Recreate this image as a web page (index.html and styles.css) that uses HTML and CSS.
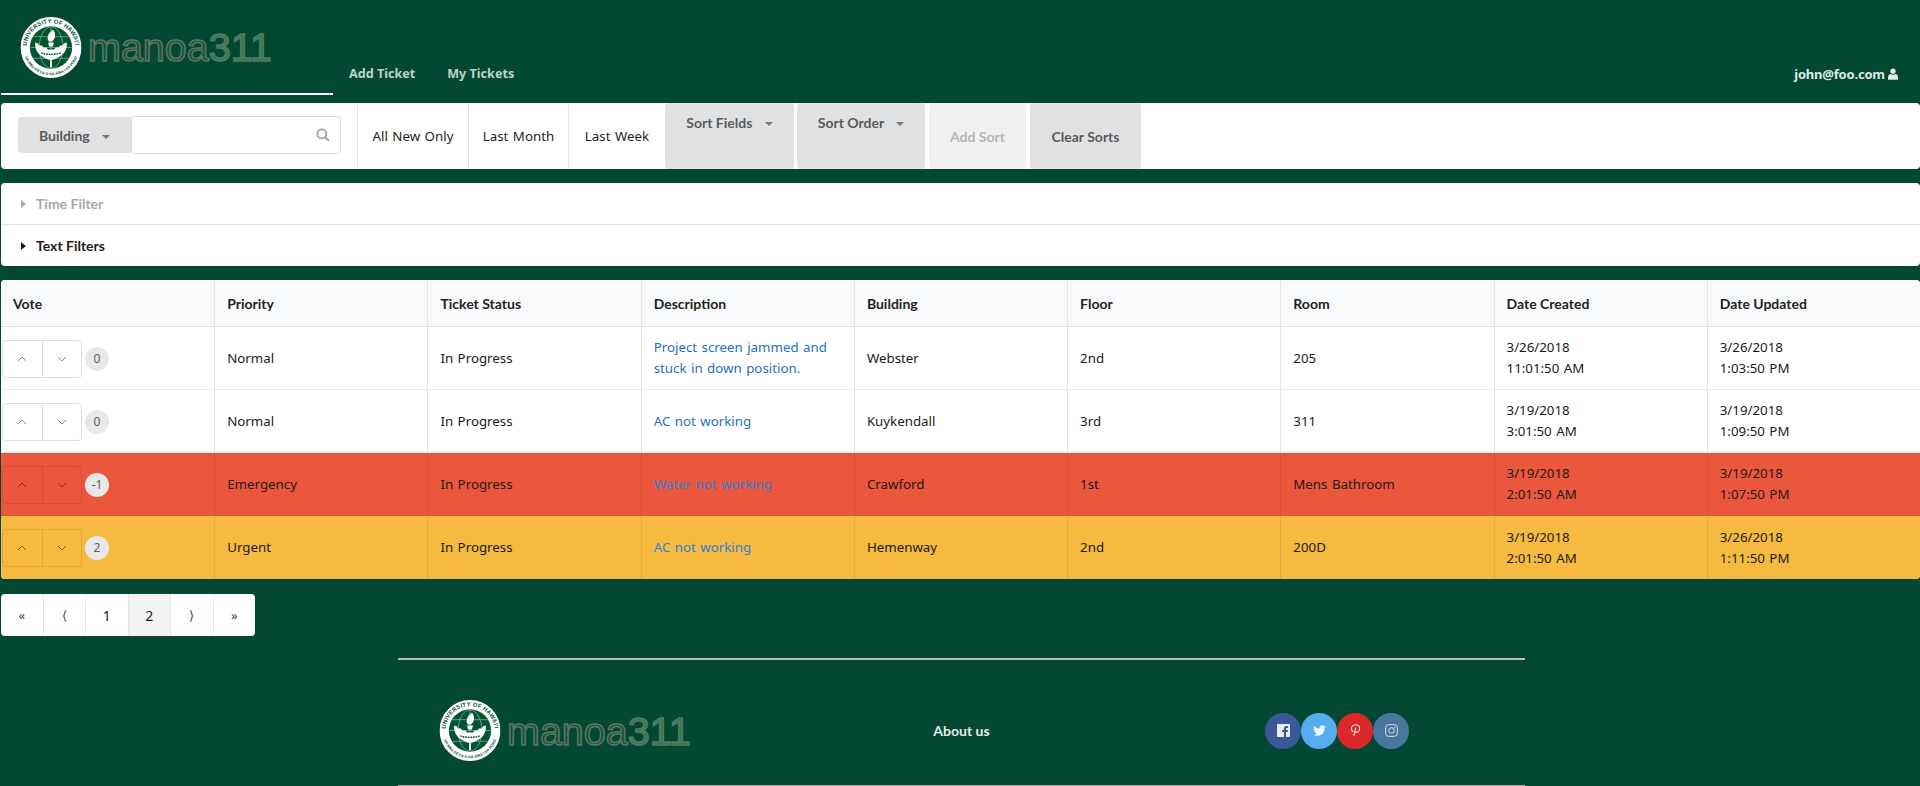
FILE: index.html
```html
<!DOCTYPE html>
<html lang="en">
<head>
    <meta charset="UTF-8">
    <meta name="viewport" content="width=device-width, initial-scale=1.0">
    <title>manoa311</title>
    <link rel="stylesheet" href="styles.css">
</head>
<body>
    <!-- Shared seal artwork + chevrons -->
    <svg class="defs" width="0" height="0">
        <defs>
            <path id="arcTop" d="M7.500 39.400A24.900 24.900 0 1 1 54.500 39.400"/>
            <path id="arcBottom" d="M2.800 31a28.200 28.200 0 0 0 56.400 0"/>
        </defs>
        <symbol id="seal" viewBox="0 0 62 62">
            <circle cx="31" cy="31" r="31" fill="#fff"/>
            <circle cx="31" cy="31" r="21.500" fill="#03552f"/>
            <g fill="none" stroke="#8fb89f" stroke-width=".7">
                <ellipse cx="31" cy="31" rx="12" ry="21"/>
                <path d="M31 10v42M10 31h42M13 20h36M13 42h36"/>
            </g>
            <path d="M33 13c3 3 3 9-1 12h-3c-3-3-1-9 4-12z" fill="#fff"/>
            <path d="M28 26h6l-1 4h-4z" fill="#fff"/>
            <path d="M15 26l3 1 1 2 3 0 1 2 3 0 2 2h6l2-2 3 0 1-2 3 0 1-2 3-1c1 8-4 15-16 18c-12-3-17-10-16-18z" fill="#fff"/>
            <path d="M21 36.500c6 2 14 2 20 0" fill="none" stroke="#03552f" stroke-width="1.500" stroke-dasharray="1.800 .8"/>
            <path d="M31 44v7" stroke="#fff" stroke-width="1.800"/>
        </symbol>
        <symbol id="chev-up" viewBox="0 0 10 6"><path d="M1 5l4-4 4 4" fill="none" stroke="currentColor" stroke-width="1"/></symbol>
        <symbol id="chev-down" viewBox="0 0 10 6"><path d="M1 1l4 4 4-4" fill="none" stroke="currentColor" stroke-width="1"/></symbol>
    </svg>

    <!-- Top nav -->
    <header class="topbar">
        <a class="brand" href="#">
            <svg class="seal" viewBox="0 0 62 62">
                <use href="#seal"/>
                <text class="seal-top"><textPath href="#arcTop" startOffset="50%" text-anchor="middle">UNIVERSITY OF HAWAI'I</textPath></text>
                <text class="seal-bottom"><textPath href="#arcBottom" startOffset="50%" text-anchor="middle">UA MAU KE EA O KA ĀINA I KA PONO</textPath></text>
            </svg>
            <span class="wordmark">manoa<b>311</b></span>
        </a>
        <nav class="nav-links">
            <a href="#">Add Ticket</a>
            <a href="#">My Tickets</a>
        </nav>
        <a class="user" href="#">john@foo.com
            <svg class="user-icon" viewBox="0 0 12 14"><circle cx="6" cy="3.600" r="3.200"/><path d="M0 14v-3.200C0 8.600 1.400 7 3 7c.8.600 1.800 1 3 1s2.200-.4 3-1c1.600 0 3 1.600 3 3.800V14z"/></svg>
        </a>
    </header>

    <!-- Toolbar -->
    <div class="toolbar">
        <div class="search-item">
            <button class="btn building">Building <i class="caret"></i></button>
            <div class="search-box">
                <svg class="search-icon" viewBox="0 0 14 14"><circle cx="5.800" cy="5.800" r="4.500" fill="none" stroke="currentColor" stroke-width="1.800"/><path d="M9 9l4 4" stroke="currentColor" stroke-width="2"/></svg>
            </div>
        </div>
        <a class="tool-link" href="#">All New Only</a>
        <a class="tool-link" href="#">Last Month</a>
        <a class="tool-link no-border" href="#">Last Week</a>
        <button class="btn sort sort-fields">Sort Fields <i class="caret"></i></button>
        <button class="btn sort sort-order">Sort Order <i class="caret"></i></button>
        <button class="btn action add-sort">Add Sort</button>
        <button class="btn action clear-sorts">Clear Sorts</button>
    </div>

    <!-- Filters -->
    <div class="filters">
        <div class="filter-row muted"><i class="arrow"></i>Time Filter</div>
        <div class="filter-row"><i class="arrow"></i>Text Filters</div>
    </div>

    <!-- Tickets -->
    <table class="tickets">
        <thead>
            <tr>
                <th>Vote</th>
                <th>Priority</th>
                <th>Ticket Status</th>
                <th>Description</th>
                <th>Building</th>
                <th>Floor</th>
                <th>Room</th>
                <th>Date Created</th>
                <th>Date Updated</th>
            </tr>
        </thead>
        <tbody>
            <tr>
                <td class="vote"><div class="vote-wrap"><div class="vote-btns"><button><svg><use href="#chev-up"/></svg></button><button><svg><use href="#chev-down"/></svg></button></div><span class="count plain">0</span></div></td>
                <td>Normal</td>
                <td>In Progress</td>
                <td><a href="#">Project screen jammed and stuck in down position.</a></td>
                <td>Webster</td>
                <td>2nd</td>
                <td>205</td>
                <td>3/26/2018<br>11:01:50 AM</td>
                <td>3/26/2018<br>1:03:50 PM</td>
            </tr>
            <tr>
                <td class="vote"><div class="vote-wrap"><div class="vote-btns"><button><svg><use href="#chev-up"/></svg></button><button><svg><use href="#chev-down"/></svg></button></div><span class="count plain">0</span></div></td>
                <td>Normal</td>
                <td>In Progress</td>
                <td><a href="#">AC not working</a></td>
                <td>Kuykendall</td>
                <td>3rd</td>
                <td>311</td>
                <td>3/19/2018<br>3:01:50 AM</td>
                <td>3/19/2018<br>1:09:50 PM</td>
            </tr>
            <tr class="emergency">
                <td class="vote"><div class="vote-wrap"><div class="vote-btns"><button><svg><use href="#chev-up"/></svg></button><button><svg><use href="#chev-down"/></svg></button></div><span class="count">-1</span></div></td>
                <td>Emergency</td>
                <td>In Progress</td>
                <td><a href="#">Water not working</a></td>
                <td>Crawford</td>
                <td>1st</td>
                <td>Mens Bathroom</td>
                <td>3/19/2018<br>2:01:50 AM</td>
                <td>3/19/2018<br>1:07:50 PM</td>
            </tr>
            <tr class="urgent">
                <td class="vote"><div class="vote-wrap"><div class="vote-btns"><button><svg><use href="#chev-up"/></svg></button><button><svg><use href="#chev-down"/></svg></button></div><span class="count">2</span></div></td>
                <td>Urgent</td>
                <td>In Progress</td>
                <td><a href="#">AC not working</a></td>
                <td>Hemenway</td>
                <td>2nd</td>
                <td>200D</td>
                <td>3/19/2018<br>2:01:50 AM</td>
                <td>3/26/2018<br>1:11:50 PM</td>
            </tr>
        </tbody>
    </table>

    <!-- Pagination -->
    <div class="pager">
        <a class="glyph" href="#">«</a>
        <a class="glyph" href="#">⟨</a>
        <a href="#">1</a>
        <a class="active" href="#">2</a>
        <a class="glyph" href="#">⟩</a>
        <a class="glyph" href="#">»</a>
    </div>

    <!-- Footer -->
    <footer class="footer">
        <a class="brand-foot" href="#">
            <svg class="seal" viewBox="0 0 62 62">
                <use href="#seal"/>
                <text class="seal-top"><textPath href="#arcTop" startOffset="50%" text-anchor="middle">UNIVERSITY OF HAWAI'I</textPath></text>
                <text class="seal-bottom"><textPath href="#arcBottom" startOffset="50%" text-anchor="middle">UA MAU KE EA O KA ĀINA I KA PONO</textPath></text>
            </svg>
            <span class="wordmark">manoa<b>311</b></span>
        </a>
        <a class="about" href="#">About us</a>
        <div class="socials">
            <a class="fb" href="#"><svg viewBox="0 0 14 14"><path fill="#e9edf5" d="M.8 0h12.400c.4 0 .8.400.8.800v12.400c0 .4-.4.800-.8.800H9.700V8.600h1.800l.3-2.100H9.700V5.200c0-.6.200-1 1-1h1.200V2.300c-.3 0-.9-.1-1.700-.1-1.700 0-2.800 1-2.800 2.900v1.400H5.500v2.100h1.900V14H.8c-.4 0-.8-.4-.8-.8V.8C0 .4.400 0 .8 0z"/></svg></a>
            <a class="tw" href="#"><svg viewBox="0 0 16 13"><path fill="#eaf5fd" d="M16 1.500c-.6.300-1.200.5-1.900.5.700-.4 1.200-1 1.400-1.800-.6.400-1.300.7-2.100.8C12.800.400 12 0 11.100 0 9.300 0 7.800 1.500 7.800 3.300c0 .3 0 .5.100.7C5.200 3.900 2.800 2.600 1.100.6.800 1.100.700 1.600.700 2.200c0 1.100.6 2.100 1.500 2.700-.5 0-1-.2-1.500-.4 0 1.600 1.100 2.900 2.600 3.200-.5.100-1 .2-1.500.1.400 1.300 1.600 2.200 3.100 2.300C3.700 11.200 2 11.800 0 11.600 1.500 12.500 3.200 13 5 13c6 0 9.400-5 9.400-9.400v-.4c.7-.4 1.200-1 1.600-1.700z"/></svg></a>
            <a class="pt" href="#"><svg viewBox="0 0 12 16"><path fill="none" stroke="#fbe9e9" stroke-width="1.300" d="M3.200 9.500C1.800 8.700 1 7.500 1 6 1 3 3.300 1 6 1s5 1.700 5 4.500c0 2.800-1.700 4.800-3.700 4.800-1 0-1.800-.6-2-1.400M6.200 4.500 3.800 15"/></svg></a>
            <a class="ig" href="#"><svg viewBox="0 0 14 14"><g fill="none" stroke="#dfe7ef" stroke-width="1"><rect x=".7" y=".7" width="12.600" height="12.600" rx="3.200"/><circle cx="7" cy="7" r="3"/></g><circle cx="10.600" cy="3.400" r=".8" fill="#dfe7ef"/></svg></a>
        </div>
    </footer>
</body>
</html>
```

FILE: styles.css
```css
* {
    margin: 0;
    padding: 0;
    box-sizing: border-box;
}

html, body {
    background: #034832;
    overflow: hidden;
}

body {
    height: 786px;
    padding-left: 1px;
    font-family: "Noto Sans", sans-serif;
    font-size: 13.300px;
    word-spacing: 1px;
    color: #1a1a1a;
}

a {
    text-decoration: none;
    color: inherit;
}

button {
    border: none;
    font: inherit;
}

.defs {
    position: absolute;
}

.seal-top {
    font: bold 6px "Liberation Sans", sans-serif;
    fill: #03552f;
    letter-spacing: .2px;
    word-spacing: 0;
}

.seal-bottom {
    font: bold 3.800px "Liberation Sans", sans-serif;
    fill: #03552f;
    word-spacing: 0;
}

/* Top nav */
.topbar {
    height: 103px;
    display: flex;
    color: #cfe0d8;
}

.brand {
    width: 332px;
    height: 95px;
    padding: 17px 0 0 19px;
    border-bottom: 2px solid #fff;
    display: flex;
    align-items: flex-start;
}

.seal {
    width: 62px;
    height: 61px;
    flex: none;
}

.wordmark {
    font: 39.500px "Liberation Sans", sans-serif;
    color: #264c35;
    -webkit-text-stroke: 1.500px #557a66;
    margin: 8px 0 0 6px;
    line-height: 44px;
    white-space: nowrap;
}

.wordmark b {
    font-weight: normal;
    color: #2f7d52;
}

.nav-links {
    display: flex;
    gap: 32px;
    padding: 65px 0 0 16px;
    font: bold 12.600px "Noto Sans", sans-serif;
    word-spacing: 0;
    color: #bcd3c8;
}

.user {
    margin-left: auto;
    padding: 65px 22px 0 0;
    font: bold 13px "Noto Sans", sans-serif;
    letter-spacing: -.2px;
    word-spacing: 0;
    color: #dfe9e4;
}

.user-icon {
    width: 10px;
    height: 12px;
    fill: currentColor;
    vertical-align: -1px;
}

/* Toolbar */
.toolbar {
    height: 66px;
    background: #fff;
    border-radius: 4px;
    display: flex;
}

.btn {
    background: #e0e1e2;
    color: #5a5a5a;
    font-family: Lato, sans-serif;
    font-weight: bold;
    font-size: 14px;
    word-spacing: 0;
    border-radius: 4px;
    cursor: pointer;
}

.caret {
    display: inline-block;
    margin-left: 9px;
    vertical-align: 2px;
    border: 4px solid transparent;
    border-top: 4px solid #777;
    border-bottom: none;
}

.search-item {
    width: 357px;
    padding: 0 0 2px 17px;
    display: flex;
    align-items: center;
    border-right: 1px solid #e6e6e6;
}

.building {
    width: 113px;
    height: 36px;
    border-radius: 4px 0 0 4px;
}

.search-box {
    width: 210px;
    height: 38px;
    border: 1px solid #dcdcdc;
    border-radius: 4px;
    display: flex;
    align-items: center;
    justify-content: flex-end;
    padding-right: 10px;
    color: #a0a0a0;
}

.search-icon {
    width: 14px;
    height: 14px;
}

.tool-link {
    display: flex;
    align-items: center;
    justify-content: center;
    padding-bottom: 1px;
    white-space: nowrap;
    border-right: 1px solid #e6e6e6;
    color: #1e1e1e;
}

.tool-link:nth-of-type(1) {
    width: 111px;
}

.tool-link:nth-of-type(2) {
    width: 100px;
}

.tool-link:nth-of-type(3) {
    width: 96px;
}

.no-border {
    border-right: none;
}

.sort {
    padding-bottom: 28px;
}

.sort-fields {
    width: 129px;
    margin-right: 3px;
}

.sort-order {
    width: 128px;
    margin-right: 4px;
}

.add-sort {
    width: 97px;
    margin-right: 4px;
    background: #f0f0f0;
    color: #b5b5b5;
}

.clear-sorts {
    width: 111px;
}

/* Filters */
.filters {
    margin-top: 14px;
    background: #fff;
    border-radius: 4px;
    font-family: Lato, sans-serif;
    font-size: 14px;
    font-weight: bold;
    word-spacing: 0;
}

.filter-row {
    height: 41px;
    display: flex;
    align-items: center;
    padding-left: 20px;
    color: #1e1e1e;
}

.filter-row + .filter-row {
    height: 42px;
    border-top: 1px solid #e0e0e0;
}

.filter-row.muted {
    color: #a8a8a8;
}

.arrow {
    border: 4px solid transparent;
    border-left: 5px solid currentColor;
    border-right: none;
    margin-right: 10px;
}

/* Tickets */
.tickets {
    margin-top: 14px;
    width: 1919px;
    table-layout: fixed;
    border-collapse: separate;
    border-spacing: 0;
    background: #fff;
    border-radius: 4px;
    overflow: hidden;
}

.tickets th {
    height: 47px;
    padding: 0 12px;
    text-align: left;
    background: #f9fafb;
    font: bold 14px Lato, sans-serif;
    word-spacing: 0;
    color: #222;
    border-bottom: 1px solid #e2e3e4;
}

.tickets td {
    height: 63px;
    padding: 0 12px;
    line-height: 21px;
    border-bottom: 1px solid #e8e8e8;
}

.tickets th + th,
.tickets td + td {
    border-left: 1px solid #e6e6e6;
}

.tickets tr:last-child td {
    border-bottom: none;
}

.tickets td a {
    color: #1e70bf;
}

.tickets td.vote {
    padding: 1px 0 0 1px;
}

.vote-wrap {
    display: flex;
    align-items: center;
    gap: 3px;
}

.vote-btns {
    width: 80px;
    height: 38px;
    display: flex;
    border: 1px solid #dedede;
    border-radius: 4px;
}

.vote-btns button {
    flex: 1;
    background: transparent;
    color: #8a8a8a;
    cursor: pointer;
}

.vote-btns button + button {
    border-left: 1px solid #dedede;
}

.vote-btns svg {
    width: 10px;
    height: 6px;
    display: block;
    margin: 0 auto;
}

.count {
    width: 24px;
    height: 24px;
    border-radius: 50%;
    background: #e8e8e8;
    color: #5c5c5c;
    font-size: 12px;
    line-height: 24px;
    text-align: center;
}

.tickets .emergency td {
    background: #ea573d;
    border-color: rgba(0, 0, 0, 0.07);
}

.tickets .urgent td {
    background: #f5ba3f;
    border-color: rgba(0, 0, 0, 0.07);
}

.emergency .vote-btns,
.urgent .vote-btns,
.emergency .vote-btns button + button,
.urgent .vote-btns button + button {
    border-color: rgba(0, 0, 0, 0.1);
}

.emergency .vote-btns button,
.urgent .vote-btns button {
    color: rgba(0, 0, 0, 0.45);
}

.tickets .emergency td a,
.tickets .urgent td a {
    color: #2f7fd6;
}

/* Pagination */
.pager {
    margin-top: 15px;
    width: 254px;
    height: 42px;
    display: flex;
    background: #fff;
    border-radius: 4px;
    overflow: hidden;
}

.pager a {
    flex: 1;
    display: flex;
    align-items: center;
    justify-content: center;
    font-size: 14px;
    color: #222;
}

.pager a + a {
    border-left: 1px solid #e6e6e6;
}

.pager .active {
    background: #f3f3f3;
}

.pager .glyph {
    font-size: 13px;
    color: #444;
}

/* Footer */
.footer {
    margin: 22px 0 0 397px;
    width: 1127px;
    height: 128px;
    padding-top: 16px;
    border-top: 2px solid #b9bdbb;
    border-bottom: 1px solid #a9b1ad;
    display: grid;
    grid-template-columns: repeat(3, 1fr);
    align-items: center;
}

.brand-foot {
    display: flex;
    align-items: center;
    padding-left: 41px;
}

.brand-foot .wordmark {
    margin-top: 0;
}

.about {
    justify-self: center;
    font: bold 14px Lato, sans-serif;
    word-spacing: 0;
    color: #e6eeea;
}

.socials {
    justify-self: center;
    display: flex;
}

.socials a {
    width: 36px;
    height: 36px;
    border-radius: 50%;
    display: flex;
    align-items: center;
    justify-content: center;
}

.socials svg {
    width: 13px;
    height: 13px;
}

.fb {
    background: #3b5998;
}

.tw {
    background: #55acee;
}

.pt {
    background: #db2828;
}

.ig {
    background: #49769c;
}
```
